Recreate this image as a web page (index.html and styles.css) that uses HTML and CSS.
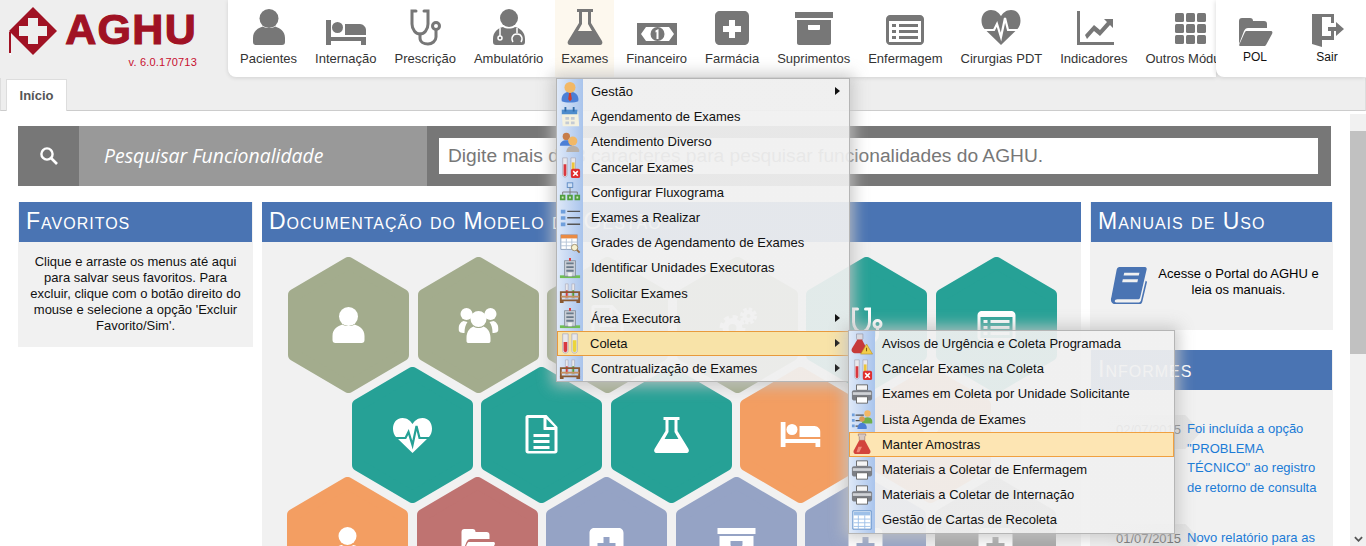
FILE: index.html
```html
<!DOCTYPE html>
<html lang="pt-BR">
<head>
<meta charset="utf-8">
<title>AGHU</title>
<link rel="stylesheet" href="styles.css">
</head>
<body>
<svg class="defs" aria-hidden="true">
  <symbol id="i-user" viewBox="0 0 40 40"><circle cx="20" cy="11.500" r="9.500"/><path d="M4 31c0-7 5-10 10-11.500 3 2 9 2 12 0 5 1.500 10 4.500 10 11.500v4c0 2-1 3-3 3H7c-2 0-3-1-3-3z"/></symbol>
  <symbol id="i-users" viewBox="0 0 40 40"><circle cx="8" cy="9" r="6"/><circle cx="32" cy="9" r="6"/><path d="M0 24c0-4 2-7 5-8l4 1c-2 3-3 6-3 11-4 0-6-1-6-4zM40 24c0-4-2-7-5-8l-4 1c2 3 3 6 3 11 4 0 6-1 6-4z"/><circle cx="20" cy="14" r="8"/><path d="M8 33c0-6 3-10 7-11.500 3 2 7 2 10 0 4 1.500 7 5.500 7 11.500v3c0 1.500-1 2-2 2H10c-1 0-2-.5-2-2z"/></symbol>
  <symbol id="i-bed" viewBox="0 0 40 40"><path d="M0 13h5v17h35v8h-5v-4H5v4H0z"/><circle cx="11.500" cy="20.500" r="5.500"/><path d="M19 17h15c3 0 6 3 6 6v5H19z"/></symbol>
  <symbol id="i-steth" viewBox="0 0 40 40"><g fill="none" stroke="currentColor" stroke-width="3" stroke-linecap="round"><path d="M11 4H7v13c0 6 4 10 8 10s8-4 8-10V4h-4"/><path d="M15 27v4c0 4 4 6 8 6s8-3 8-7v-7"/><circle cx="31" cy="19" r="3.500"/></g></symbol>
  <symbol id="i-doc" viewBox="0 0 40 40"><circle cx="20" cy="11" r="9"/><path d="M4 32c0-7 5-11 10-12 3 2 9 2 12 0 5 1 10 5 10 12v3c0 2-1 3-3 3H7c-2 0-3-1-3-3z"/><g fill="none" stroke="var(--cut,#fff)" stroke-width="1.500"><path d="M11 21v8M28 21v5M24 35c-2-3-1-8 4-8s6 5 4 8"/><circle cx="11" cy="31" r="2"/></g></symbol>
  <symbol id="i-flask" viewBox="0 0 40 40"><path fill-rule="evenodd" d="M12 2h16v3h-2v11l11 18c1 2 0 4-2 4H5c-2 0-3-2-2-4l11-18V5h-2zM17 5v12l-4 7h14l-4-7V5z"/></symbol>
  <symbol id="i-money" viewBox="0 0 40 40"><path fill-rule="evenodd" d="M0 16h41v22H0zM9 20l-5 7 5 7h23l5-7-5-7z"/><circle cx="20.500" cy="27" r="7"/><path fill="var(--cut,#fff)" d="M18.500 23.500l3-1.500v10h-2v-7l-1 .5z"/></symbol>
  <symbol id="i-plus" viewBox="0 0 40 40"><path fill-rule="evenodd" d="M8 4h24c3 0 5 2 5 5v24c0 3-2 5-5 5H8c-3 0-5-2-5-5V9c0-3 2-5 5-5zM17 13v6h-6v6h6v6h6v-6h6v-6h-6v-6z"/></symbol>
  <symbol id="i-box" viewBox="0 0 40 40"><path fill-rule="evenodd" d="M1 5h38v6H1zM3 13h34v23c0 1-1 2-2 2H5c-1 0-2-1-2-2zM14 18v4c0 .5 .5 1 1 1h10c.5 0 1-.5 1-1v-4z"/></symbol>
  <symbol id="i-list" viewBox="0 0 40 40"><path fill-rule="evenodd" d="M5 8h30c2 0 4 2 4 4v22c0 2-2 4-4 4H5c-2 0-4-2-4-4V12c0-2 2-4 4-4zM4 14v21h32V14zM7 17h4v3H7zM14 17h19v3H14zM7 23h4v3H7zM14 23h19v3H14zM7 29h4v3H7zM14 29h19v3H14z"/></symbol>
  <symbol id="i-heart" viewBox="0 0 40 40"><path d="M20 38L3.500 22C-2 16 0 3 10 3c5 0 8 3 10 6 2-3 5-6 10-6 10 0 12 13 6.500 19z"/><path fill="none" stroke="var(--cut,#fff)" stroke-width="2.200" d="M0 23h13l3-6 4 13 4-19 3 12h13"/></symbol>
  <symbol id="i-chart" viewBox="0 0 40 40"><path d="M3 4h3v31h34v3H3z"/><path d="M11 28l9-10 6 5 7-8-3-3h9v9l-3-3-10 11-6-5-7 8z"/></symbol>
  <symbol id="i-grid" viewBox="0 0 40 40"><g><rect x="4" y="6" width="9" height="9" rx="1.500"/><rect x="15" y="6" width="9" height="9" rx="1.500"/><rect x="26" y="6" width="9" height="9" rx="1.500"/><rect x="4" y="17" width="9" height="9" rx="1.500"/><rect x="15" y="17" width="9" height="9" rx="1.500"/><rect x="26" y="17" width="9" height="9" rx="1.500"/><rect x="4" y="28" width="9" height="9" rx="1.500"/><rect x="15" y="28" width="9" height="9" rx="1.500"/><rect x="26" y="28" width="9" height="9" rx="1.500"/></g></symbol>
  <symbol id="i-folder" viewBox="0 0 40 40"><path d="M4 36V13c0-2 1-3 3-3h8c2 0 3 1 3 3h11c2 0 3 1 3 3v4H13c-2 0-3 1-4 3z"/><path d="M11 23h25c1 0 2 1 1 3l-6 11c-.5 .7-1 1-2 1H5c-1 0-1-1-.5-2l5-11c.5-1 1-2 1.500-2z"/></symbol>
  <symbol id="i-exit" viewBox="0 0 40 40"><path d="M5 6h22v9h-3v-6H15v19h9v-5h3v9H15v7L5 36z"/><path d="M21 19h8v-5l8 7-8 7v-5h-8z"/></symbol>
  <symbol id="i-gear" viewBox="0 0 40 40"><g fill="none" stroke="currentColor"><circle cx="15" cy="23" r="7" stroke-width="6"/><circle cx="15" cy="23" r="11" stroke-width="4" stroke-dasharray="5 3.600"/><circle cx="31" cy="11" r="4" stroke-width="4"/><circle cx="31" cy="11" r="7" stroke-width="3" stroke-dasharray="3.500 2"/></g></symbol>
  <symbol id="i-docfile" viewBox="0 0 40 40"><path fill-rule="evenodd" d="M6 0h19l11 12v24c0 1.500-1 2.500-2.500 2.500h-27C5 38.500 4 37.500 4 36V2c0-1 1-2 2-2zM7 3v33h26V15H23c-1 0-1-.5-1-1V3zM25 4v8h8zM12 19h16v3H12zM12 25h16v3H12zM12 31h16v3H12z"/></symbol>
  <symbol id="i-search" viewBox="0 0 20 20"><path fill="none" stroke="currentColor" stroke-width="2.600" d="M12 12l6 6"/><circle cx="8" cy="8" r="5.600" fill="none" stroke="currentColor" stroke-width="2.400"/></symbol>
  <symbol id="i-book" viewBox="0 0 40 40"><path fill-rule="evenodd" d="M10 1h26c2 0 3 1 2.500 3L32 32c-.5 2-1 3-3 3H8c-2 0-3 1-3 2s1 1.500 3 1.500h22c1 0 2-1 2.500-2l5-21 1.500 1-5 21c-.5 2-2 3-4 3H7c-4 0-6-2-6-5 0-1 0-2 .5-3L7 4c.5-2 1.500-3 3-3zM15 7l-.7 3h16l.7-3zM13.500 14l-.7 3h16l.7-3z"/></symbol>
  <symbol id="m-person" viewBox="0 0 24 24"><path fill="#4c7fd6" d="M3 22c-1-5 2-9 6-10h6c4 1 7 5 6 10-3 2-15 2-18 0z"/><path fill="#d23a2c" d="M11 13h2l1 7-2 2-2-2z"/><circle cx="12" cy="7" r="6" fill="#f2b866"/></symbol>
  <symbol id="m-cal" viewBox="0 0 24 24"><path fill="#f4f1de" d="M3 6h18l1 16H4z"/><path fill="#4d8ccc" d="M3 4h17v5H3z"/><path fill="#2f6aa8" d="M6 1h2v5H6zM15 1h2v5h-2z"/><path fill="#c4cbd4" d="M7 12h4v3H7zM13 12h4v3h-4zM7 17h4v3H7zM13 17h4v3h-4z"/></symbol>
  <symbol id="m-people" viewBox="0 0 24 24"><circle cx="8" cy="6" r="4" fill="#c77d4a"/><path fill="#4c7fd6" d="M1 16c0-4 3-6 7-6s7 2 6 6z"/><circle cx="15" cy="11" r="5" fill="#f2b866"/><path fill="#b8b0a8" d="M8 23c0-4 3-7 7-7s8 3 7 7z"/></symbol>
  <symbol id="m-tubes" viewBox="0 0 24 24"><path fill="#e8e8ec" stroke="#aab" stroke-width=".8" d="M4 2h6v18c0 2-1 3-3 3s-3-1-3-3zM14 2h6v18c0 2-1 3-3 3s-3-1-3-3z"/><path fill="#d9383f" d="M5 11h4v9c0 1-1 2-2 2s-2-1-2-2z"/><path fill="#ecd53a" d="M15 9h4v11c0 1-1 2-2 2s-2-1-2-2z"/></symbol>
  <symbol id="m-tubesx" viewBox="0 0 24 24"><path fill="#e8e8ec" stroke="#aab" stroke-width=".8" d="M4 2h5v18c0 2-1 3-2.500 3S4 22 4 20zM13 2h5v18c0 2-1 3-2.500 3S13 22 13 20z"/><path fill="#d9383f" d="M5 9h3v11c0 1-.5 2-1.500 2S5 21 5 20z"/><path fill="#ecc53a" d="M14 7h3v8h-3z"/><rect x="13" y="14" width="10" height="10" rx="2" fill="#e03030"/><path stroke="#fff" stroke-width="1.600" d="M15.500 16.500l5 5M20.500 16.500l-5 5"/></symbol>
  <symbol id="m-flow" viewBox="0 0 24 24"><rect x="9" y="2" width="6" height="5" fill="#cfe0f5" stroke="#5d8bc4"/><path fill="none" stroke="#777" d="M12 7v5M4 15v-3h16v3M12 12v3"/><path fill="#4f9e3e" d="M1 15h6v6H1zM9 15h6v6H9zM17 15h6v6h-6z"/><path fill="#cfe8c0" d="M3 17h2v2H3zM11 17h2v2h-2zM19 17h2v2h-2z"/></symbol>
  <symbol id="m-list" viewBox="0 0 24 24"><path fill="#6f9fdc" d="M2 3h5v4H2zM2 10h5v4H2zM2 17h5v4H2z"/><path fill="#555" d="M9 4h14v1.500H9zM9 11h14v1.500H9zM9 18h14v1.500H9z"/></symbol>
  <symbol id="m-grid" viewBox="0 0 24 24"><path fill="#fff" stroke="#8ba0bc" d="M2 3h18v16H2z"/><path fill="#e98b45" d="M2 3h18v4H2z"/><path fill="none" stroke="#b5c4d6" d="M2 11h18M2 15h18M8 7v12M14 7v12"/><circle cx="17" cy="17" r="3.500" fill="#f6f1d0" stroke="#9a8a6a"/><path stroke="#9a6a3a" stroke-width="2" d="M19.500 19.500l3 3"/></symbol>
  <symbol id="m-bldg" viewBox="0 0 24 24"><path fill="#6fbf52" d="M1 20h22v3H1z"/><path fill="#c9ced6" stroke="#7c8692" stroke-width=".8" d="M6 4h12v17H6z"/><path fill="#697a8a" d="M8 6h8v2H8zM8 10h8v2H8zM8 14h8v2H8z"/><path fill="#f3f3f3" d="M10 17h4v4h-4z"/><path fill="#d33" d="M11 1h2v3h-2z"/></symbol>
  <symbol id="m-rack" viewBox="0 0 24 24"><path fill="#e8e8ec" stroke="#aab" stroke-width=".7" d="M7 2h3v16H7zM14 2h3v16h-3z"/><path fill="#d9383f" d="M7.500 9h2v8h-2z"/><path fill="#4f9e3e" d="M14.500 9h2v8h-2z"/><path fill="none" stroke="#8a5a34" stroke-width="2" d="M2 11h20v9H2z"/><path fill="#c58e5e" d="M2 15h20v2H2z"/><path fill="#8a5a34" d="M1 20h4v3H1zM19 20h4v3h-4z"/></symbol>
  <symbol id="m-flaskw" viewBox="0 0 24 24"><path fill="#d8d8e0" stroke="#889" stroke-width=".6" d="M6 1h7v5l-1 2 H7L6 6z"/><path fill="#c63a3a" d="M7 7h5l5 10c1 3-1 5-3 5H4c-3 0-4-3-3-5z"/><path fill="#f2cd4a" stroke="#b28a20" stroke-width=".6" d="M17 12l6.500 11h-13z"/><path fill="#70500c" d="M16.500 16h1v4h-1z"/></symbol>
  <symbol id="m-print" viewBox="0 0 24 24"><path fill="#f5f5f5" stroke="#666" d="M6 2h12v6H6z"/><path fill="#7c7f85" d="M3 8h18c1 0 2 1 2 2v7c0 1-1 2-2 2H3c-1 0-2-1-2-2v-7c0-1 1-2 2-2z"/><path fill="#cfd2d6" d="M2 10h20v3H2z"/><path fill="#fff" stroke="#666" d="M6 15h12v7H6z"/></symbol>
  <symbol id="m-agenda" viewBox="0 0 24 24"><path fill="#6f9fdc" d="M1 6h3v3H1zM1 12h3v3H1zM1 18h3v3H1z"/><path fill="#555" d="M5 7h9v1.500H5zM5 13h7v1.500H5zM5 19h7v1.500H5z"/><circle cx="18" cy="6" r="3.500" fill="#f2b866"/><path fill="#6fae4a" d="M12 17c0-4 2-7 6-7s6 3 5 7z"/><circle cx="12" cy="12" r="3" fill="#d99a55"/><path fill="#4c7fd6" d="M7 23c0-4 2-7 5-7s6 3 5 7z"/></symbol>
  <symbol id="m-flaskr" viewBox="0 0 24 24"><path fill="#d8c8c0" stroke="#866" stroke-width=".6" d="M8 1h8v2l-1 1v4H9V4L8 3z"/><path fill="#d2443c" d="M9 8h6l6 11c1 3-1 4-3 4H6c-2 0-4-1-3-4z"/><path fill="#f08a7a" d="M8 15h4l-3 6H6z"/></symbol>
  <symbol id="m-table" viewBox="0 0 24 24"><path fill="#fff" stroke="#5a8bc6" d="M2 2h20v20H2z"/><path fill="#9ec0e8" d="M3 3h18v4H3z"/><path fill="none" stroke="#9ec0e8" d="M3 11h18M3 15h18M3 19h18M8 7v15M15 7v15"/></symbol>
</svg>

<header class="top">
  <div class="logo">
    <svg class="logo-mark" viewBox="0 0 50 50"><path fill="#a01224" fill-rule="evenodd" d="M25 1l24 24-24 24L1 25zM20 12v8h-9v10h9v8h10v-8h9V20h-9v-8z"/><path fill="#fff" d="M2 27v22h1V28z"/><path fill="#a01224" d="M1 26h2v21H1z"/></svg>
    <div class="logo-text">
      <span class="logo-name">AGHU</span>
      <span class="logo-ver">v. 6.0.170713</span>
    </div>
  </div>
  <nav class="nav">
    <a class="nav-item"><svg class="nav-icon"><use href="#i-user"/></svg><span>Pacientes</span></a>
    <a class="nav-item"><svg class="nav-icon"><use href="#i-bed"/></svg><span>Internação</span></a>
    <a class="nav-item"><svg class="nav-icon"><use href="#i-steth"/></svg><span>Prescrição</span></a>
    <a class="nav-item"><svg class="nav-icon"><use href="#i-doc"/></svg><span>Ambulatório</span></a>
    <a class="nav-item nav-item-open"><svg class="nav-icon"><use href="#i-flask"/></svg><span>Exames</span></a>
    <a class="nav-item"><svg class="nav-icon"><use href="#i-money"/></svg><span>Financeiro</span></a>
    <a class="nav-item"><svg class="nav-icon"><use href="#i-plus"/></svg><span>Farmácia</span></a>
    <a class="nav-item"><svg class="nav-icon"><use href="#i-box"/></svg><span>Suprimentos</span></a>
    <a class="nav-item"><svg class="nav-icon"><use href="#i-list"/></svg><span>Enfermagem</span></a>
    <a class="nav-item"><svg class="nav-icon"><use href="#i-heart"/></svg><span>Cirurgias PDT</span></a>
    <a class="nav-item"><svg class="nav-icon"><use href="#i-chart"/></svg><span>Indicadores</span></a>
    <a class="nav-item"><svg class="nav-icon"><use href="#i-grid"/></svg><span>Outros Módulos</span></a>
  </nav>
  <div class="quick">
    <a class="quick-item"><svg class="nav-icon"><use href="#i-folder"/></svg><span>POL</span></a>
    <a class="quick-item"><svg class="nav-icon"><use href="#i-exit"/></svg><span>Sair</span></a>
  </div>
</header>

<div class="tabs"><span class="tab">Início</span></div>

<div class="page">
  <main class="main">
    <section class="search">
      <div class="search-btn"><svg class="search-icon"><use href="#i-search"/></svg></div>
      <div class="search-label">Pesquisar Funcionalidade</div>
      <div class="search-field"><input class="search-input" placeholder="Digite mais de 3 caracteres para pesquisar funcionalidades do AGHU."></div>
    </section>
    <div class="columns">
      <section class="panel panel-fav">
        <h2 class="panel-title">Favoritos</h2>
        <p class="panel-text">Clique e arraste os menus até aqui para salvar seus favoritos. Para excluir, clique com o botão direito do mouse e selecione a opção 'Excluir Favorito/Sim'.</p>
      </section>
      <section class="panel panel-doc">
        <h2 class="panel-title">Documentação do Modelo de Gestão</h2>
        <div class="hexes">
          <div class="hex-row hex-row-a">
            <svg class="hex olive" viewBox="0 0 121 136"><polygon points="60.500,6 115,38 115,98 60.500,130 6,98 6,38"/><use href="#i-user" x="40.500" y="48" width="40" height="40"/></svg>
            <svg class="hex olive" viewBox="0 0 121 136"><polygon points="60.500,6 115,38 115,98 60.500,130 6,98 6,38"/><use href="#i-users" x="40.500" y="48" width="40" height="40"/></svg>
            <svg class="hex olive" viewBox="0 0 121 136"><polygon points="60.500,6 115,38 115,98 60.500,130 6,98 6,38"/><use href="#i-docfile" x="40.500" y="48" width="40" height="40"/></svg>
            <svg class="hex olive" viewBox="0 0 121 136"><polygon points="60.500,6 115,38 115,98 60.500,130 6,98 6,38"/><use href="#i-gear" x="40.500" y="48" width="40" height="40"/></svg>
            <svg class="hex teal" viewBox="0 0 121 136"><polygon points="60.500,6 115,38 115,98 60.500,130 6,98 6,38"/><use href="#i-steth" x="40.500" y="48" width="40" height="40"/></svg>
            <svg class="hex teal" viewBox="0 0 121 136"><polygon points="60.500,6 115,38 115,98 60.500,130 6,98 6,38"/><use href="#i-list" x="40.500" y="46" width="40" height="40"/></svg>
          </div>
          <div class="hex-row hex-row-b">
            <svg class="hex teal" viewBox="0 0 121 136"><polygon points="60.500,6 115,38 115,98 60.500,130 6,98 6,38"/><use href="#i-heart" x="40.500" y="48" width="40" height="40"/></svg>
            <svg class="hex teal" viewBox="0 0 121 136"><polygon points="60.500,6 115,38 115,98 60.500,130 6,98 6,38"/><use href="#i-docfile" x="40.500" y="48" width="40" height="40"/></svg>
            <svg class="hex teal" viewBox="0 0 121 136"><polygon points="60.500,6 115,38 115,98 60.500,130 6,98 6,38"/><use href="#i-flask" x="40.500" y="48" width="40" height="40"/></svg>
            <svg class="hex orange" viewBox="0 0 121 136"><polygon points="60.500,6 115,38 115,98 60.500,130 6,98 6,38"/><use href="#i-bed" x="40.500" y="42" width="40" height="40"/></svg>
            <svg class="hex orange" viewBox="0 0 121 136"><polygon points="60.500,6 115,38 115,98 60.500,130 6,98 6,38"/><use href="#i-doc" x="40.500" y="48" width="40" height="40"/></svg>
          </div>
          <div class="hex-row hex-row-c">
            <svg class="hex orange" viewBox="0 0 121 136"><polygon points="60.500,6 115,38 115,98 60.500,130 6,98 6,38"/><use href="#i-doc" x="40.500" y="48" width="40" height="40"/></svg>
            <svg class="hex brick" viewBox="0 0 121 136"><polygon points="60.500,6 115,38 115,98 60.500,130 6,98 6,38"/><use href="#i-folder" x="40.500" y="42" width="40" height="40"/></svg>
            <svg class="hex slate" viewBox="0 0 121 136"><polygon points="60.500,6 115,38 115,98 60.500,130 6,98 6,38"/><use href="#i-plus" x="40.500" y="47" width="40" height="40"/></svg>
            <svg class="hex slate" viewBox="0 0 121 136"><polygon points="60.500,6 115,38 115,98 60.500,130 6,98 6,38"/><use href="#i-box" x="40.500" y="46" width="40" height="40"/></svg>
            <svg class="hex slate" viewBox="0 0 121 136"><polygon points="60.500,6 115,38 115,98 60.500,130 6,98 6,38"/><use href="#i-plus" x="40.500" y="47" width="40" height="40"/></svg>
            <svg class="hex grey" viewBox="0 0 121 136"><polygon points="60.500,6 115,38 115,98 60.500,130 6,98 6,38"/><use href="#i-plus" x="40.500" y="47" width="40" height="40"/></svg>
          </div>
        </div>
      </section>
      <div class="side">
        <section class="panel panel-man">
          <h2 class="panel-title">Manuais de Uso</h2>
          <div class="man-body">
            <svg class="man-icon"><use href="#i-book"/></svg>
            <p class="man-text">Acesse o Portal do AGHU e leia os manuais.</p>
          </div>
        </section>
        <section class="panel panel-inf">
          <h2 class="panel-title">Informes</h2>
          <div class="news">
            <span class="news-date">02/07/2015</span>
            <a class="news-link">Foi incluída a opção "PROBLEMA TÉCNICO" ao registro de retorno de consulta</a>
            <span class="news-date">01/07/2015</span>
            <a class="news-link">Novo relatório para as solicitações de exames</a>
          </div>
        </section>
      </div>
    </div>
  </main>
  <div class="scrollbar">
    <div class="sb-btn"></div>
    <div class="sb-thumb"></div>
    <div class="sb-track"></div>
    <div class="sb-btn sb-down"><svg class="sb-arrow" viewBox="0 0 10 6"><path d="M1 1l4 4 4-4" fill="none" stroke="#555" stroke-width="2"/></svg></div>
  </div>
</div>

<ul class="menu menu-main">
  <li class="menu-item"><svg class="menu-icon"><use href="#m-person"/></svg><span>Gestão</span><i class="arrow"></i></li>
  <li class="menu-item"><svg class="menu-icon"><use href="#m-cal"/></svg><span>Agendamento de Exames</span></li>
  <li class="menu-item"><svg class="menu-icon"><use href="#m-people"/></svg><span>Atendimento Diverso</span></li>
  <li class="menu-item"><svg class="menu-icon"><use href="#m-tubesx"/></svg><span>Cancelar Exames</span></li>
  <li class="menu-item"><svg class="menu-icon"><use href="#m-flow"/></svg><span>Configurar Fluxograma</span></li>
  <li class="menu-item"><svg class="menu-icon"><use href="#m-list"/></svg><span>Exames a Realizar</span></li>
  <li class="menu-item"><svg class="menu-icon"><use href="#m-grid"/></svg><span>Grades de Agendamento de Exames</span></li>
  <li class="menu-item"><svg class="menu-icon"><use href="#m-bldg"/></svg><span>Identificar Unidades Executoras</span></li>
  <li class="menu-item"><svg class="menu-icon"><use href="#m-rack"/></svg><span>Solicitar Exames</span></li>
  <li class="menu-item"><svg class="menu-icon"><use href="#m-bldg"/></svg><span>Área Executora</span><i class="arrow"></i></li>
  <li class="menu-item menu-item-active"><svg class="menu-icon"><use href="#m-tubes"/></svg><span>Coleta</span><i class="arrow"></i></li>
  <li class="menu-item"><svg class="menu-icon"><use href="#m-rack"/></svg><span>Contratualização de Exames</span><i class="arrow"></i></li>
</ul>

<ul class="menu menu-sub">
  <li class="menu-item"><svg class="menu-icon"><use href="#m-flaskw"/></svg><span>Avisos de Urgência e Coleta Programada</span></li>
  <li class="menu-item"><svg class="menu-icon"><use href="#m-tubesx"/></svg><span>Cancelar Exames na Coleta</span></li>
  <li class="menu-item"><svg class="menu-icon"><use href="#m-print"/></svg><span>Exames em Coleta por Unidade Solicitante</span></li>
  <li class="menu-item"><svg class="menu-icon"><use href="#m-agenda"/></svg><span>Lista Agenda de Exames</span></li>
  <li class="menu-item menu-item-hover"><svg class="menu-icon"><use href="#m-flaskr"/></svg><span>Manter Amostras</span></li>
  <li class="menu-item"><svg class="menu-icon"><use href="#m-print"/></svg><span>Materiais a Coletar de Enfermagem</span></li>
  <li class="menu-item"><svg class="menu-icon"><use href="#m-print"/></svg><span>Materiais a Coletar de Internação</span></li>
  <li class="menu-item"><svg class="menu-icon"><use href="#m-table"/></svg><span>Gestão de Cartas de Recoleta</span></li>
</ul>
</body>
</html>
```
FILE: styles.css
```css
* { box-sizing: border-box; }
html, body { margin: 0; height: 546px; overflow: hidden; }
body { position: relative; background: #fff; font-family: "Liberation Sans", Arial, sans-serif; color: #000; }
.defs { position: absolute; width: 0; height: 0; }

.top { display: flex; height: 78px; background: #eee; }
.logo { width: 228px; flex: none; display: flex; padding: 6px 0 0 8px; }
.logo-mark { width: 50px; height: 50px; flex: none; }
.logo-text { display: flex; flex-direction: column; align-items: flex-end; width: 135px; margin-left: 4px; }
.logo-name { font-size: 43px; line-height: 40px; margin-top: 3px; font-weight: 700; color: #a01224; -webkit-text-stroke: 1.200px #a01224; letter-spacing: 1.300px; }
.logo-ver { font-size: 11px; line-height: 13px; margin-top: 7px; color: #c8102e; letter-spacing: .2px; }

.nav { flex: 1; min-width: 0; height: 77px; display: flex; gap: 6px; padding-left: 6px; background: #fff; border-bottom-left-radius: 8px; box-shadow: 0 1px 4px rgba(0,0,0,.12); overflow: hidden; }
.nav-item { flex: none; display: flex; flex-direction: column; align-items: center; padding: 7px 6px 0; height: 77px; color: #333; font-size: 13px; white-space: nowrap; }
.nav-item-open { background: #fdf8ee; }
.nav-icon { width: 40px; height: 40px; flex: none; margin-bottom: 4px; fill: #777; color: #777; }
.quick { width: 150px; flex: none; height: 77px; display: flex; padding-left: 3px; background: #fff; border-bottom-left-radius: 8px; box-shadow: -1px 1px 4px rgba(0,0,0,.12); position: relative; }
.quick-item { flex: none; width: 72px; display: flex; flex-direction: column; align-items: center; padding-top: 7px; font-size: 12px; color: #111; }
.quick-item .nav-icon { margin: 1px 0 2px; }

.tabs { height: 33px; background: #eee; border-bottom: 1px solid #ccc; border-left: 1px solid #ddd; border-right: 1px solid #ddd; padding: 1px 0 0 5px; }
.tab { display: block; width: 61px; height: 32px; background: #fff; border: 1px solid #ddd; border-bottom: 0; text-align: center; line-height: 31px; font-size: 13px; font-weight: 700; color: #555; }

.page { display: flex; height: 435px; }
.main { width: 1350px; flex: none; padding: 15px 17px 0 18px; }
.scrollbar { width: 16px; flex: none; margin-top: 3px; display: flex; flex-direction: column; background: #f1f1f1; }
.sb-btn { height: 17px; flex: none; }
.sb-thumb { height: 223px; flex: none; background: #c1c1c1; }
.sb-track { flex: 1; }
.sb-down { display: flex; align-items: center; justify-content: center; height: 14px; }
.sb-arrow { width: 9px; height: 6px; }

.search { display: flex; height: 60px; margin-right: 2px; background: #777; }
.search-btn { width: 61px; display: flex; align-items: center; justify-content: center; color: #fff; }
.search-icon { width: 20px; height: 20px; }
.search-label { width: 348px; background: #999; padding-left: 25px; font: italic 19.400px/60px "Open Sans", sans-serif; color: #fff; }
.search-field { flex: 1; padding: 12px 13px 12px 12px; }
.search-input { display: block; width: 100%; height: 36px; border: 0; padding: 0 9px; background: #fff; font: 19.200px "Liberation Sans", Arial, sans-serif; color: #777; }
.search-input::placeholder { color: #777; opacity: 1; }

.columns { display: grid; grid-template-columns: 235px 819px 243px; column-gap: 9px; align-items: start; margin-top: 16px; }
.panel { background: #f1f1f1; }
.panel-title { margin: 0; height: 40px; background: #4a74b3; color: #fff; padding-left: 7px; font-size: 23px; font-weight: 400; font-variant: small-caps; letter-spacing: 1px; line-height: 39px; white-space: nowrap; }
.panel-fav .panel-title, .panel-man .panel-title, .panel-inf .panel-title { margin: 0 1px; }
.panel-text { margin: 0; padding: 12px 12px 13px; height: 105px; font-size: 13px; line-height: 16px; text-align: center; color: #111; }

.hexes { padding: 15px 0 0; height: 304px; overflow: hidden; }
.hex-row { display: flex; gap: 8.500px; height: 136px; margin-top: -26px; }
.hex-row-a { padding-left: 26px; margin-top: 0; }
.hex-row-b { padding-left: 89.500px; }
.hex-row-c { padding-left: 25px; }
.hex { width: 121px; height: 136px; flex: none; fill: #fff; color: #fff; }
.hex polygon { stroke-width: 12px; stroke-linejoin: round; }
.olive { --cut: #a3ac8d; } .olive polygon { fill: #a3ac8d; stroke: #a3ac8d; }
.teal { --cut: #26a196; } .teal polygon { fill: #26a196; stroke: #26a196; }
.orange { --cut: #f39e62; } .orange polygon { fill: #f39e62; stroke: #f39e62; }
.brick { --cut: #bf7371; } .brick polygon { fill: #bf7371; stroke: #bf7371; }
.slate { --cut: #95a3c5; } .slate polygon { fill: #95a3c5; stroke: #95a3c5; }
.grey { --cut: #a5a5a5; } .grey polygon { fill: #a5a5a5; stroke: #a5a5a5; }

.side { display: flex; flex-direction: column; gap: 20px; }
.panel-man { height: 128px; }
.man-body { display: flex; align-items: flex-start; padding: 24px 12px 0 20px; }
.man-icon { width: 38px; height: 38px; flex: none; fill: #4a74b3; color: #4a74b3; }
.man-text { margin: 0 0 0 8px; font-size: 13px; line-height: 16px; text-align: center; }
.news { display: grid; grid-template-columns: 84px 1fr; row-gap: 30px; padding: 29px 12px 0 13px; }
.news-date { width: 98px; height: 34px; margin-top: -4px; padding: 7px 0 0 13px; background: linear-gradient(90deg, #f1f1f1, #e0e0e0 60%, #e6e6e6); clip-path: polygon(0 0, 84% 0, 100% 50%, 84% 100%, 0 100%); font-size: 13px; line-height: 16px; color: #666; }
.news-link { position: relative; font-size: 13px; line-height: 19.700px; color: #1b7bd6; }

.menu { position: absolute; margin: 0; padding: 0; list-style: none; border: 1px solid #b5b5b5; background: linear-gradient(90deg, #dfe9f8, #a9c4ec 26px, rgba(240,240,240,.93) 26px); box-shadow: 0 0 14px 4px rgba(195,195,195,.85); }
.menu-main { left: 556px; top: 78px; width: 294px; }
.menu-sub { left: 848px; top: 330px; width: 327px; }
.menu-item { position: relative; display: flex; align-items: center; height: 25.200px; font-size: 13px; color: #111; white-space: nowrap; }
.menu-icon { width: 22px; height: 22px; flex: none; margin: 0 10px 0 2px; }
.menu-sub .menu-icon { margin-right: 9px; }
.menu-item-active { background: #f8e3a8; box-shadow: inset 0 0 0 1px #e89a3c; }
.menu-item-active .menu-icon { margin-right: 9px; }
.menu-item-hover { background: #fde5b3; box-shadow: inset 0 0 0 1px #f0a040; }
.arrow { position: absolute; right: 9px; top: 8px; border-left: 5px solid #111; border-top: 4.500px solid transparent; border-bottom: 4.500px solid transparent; }
```
